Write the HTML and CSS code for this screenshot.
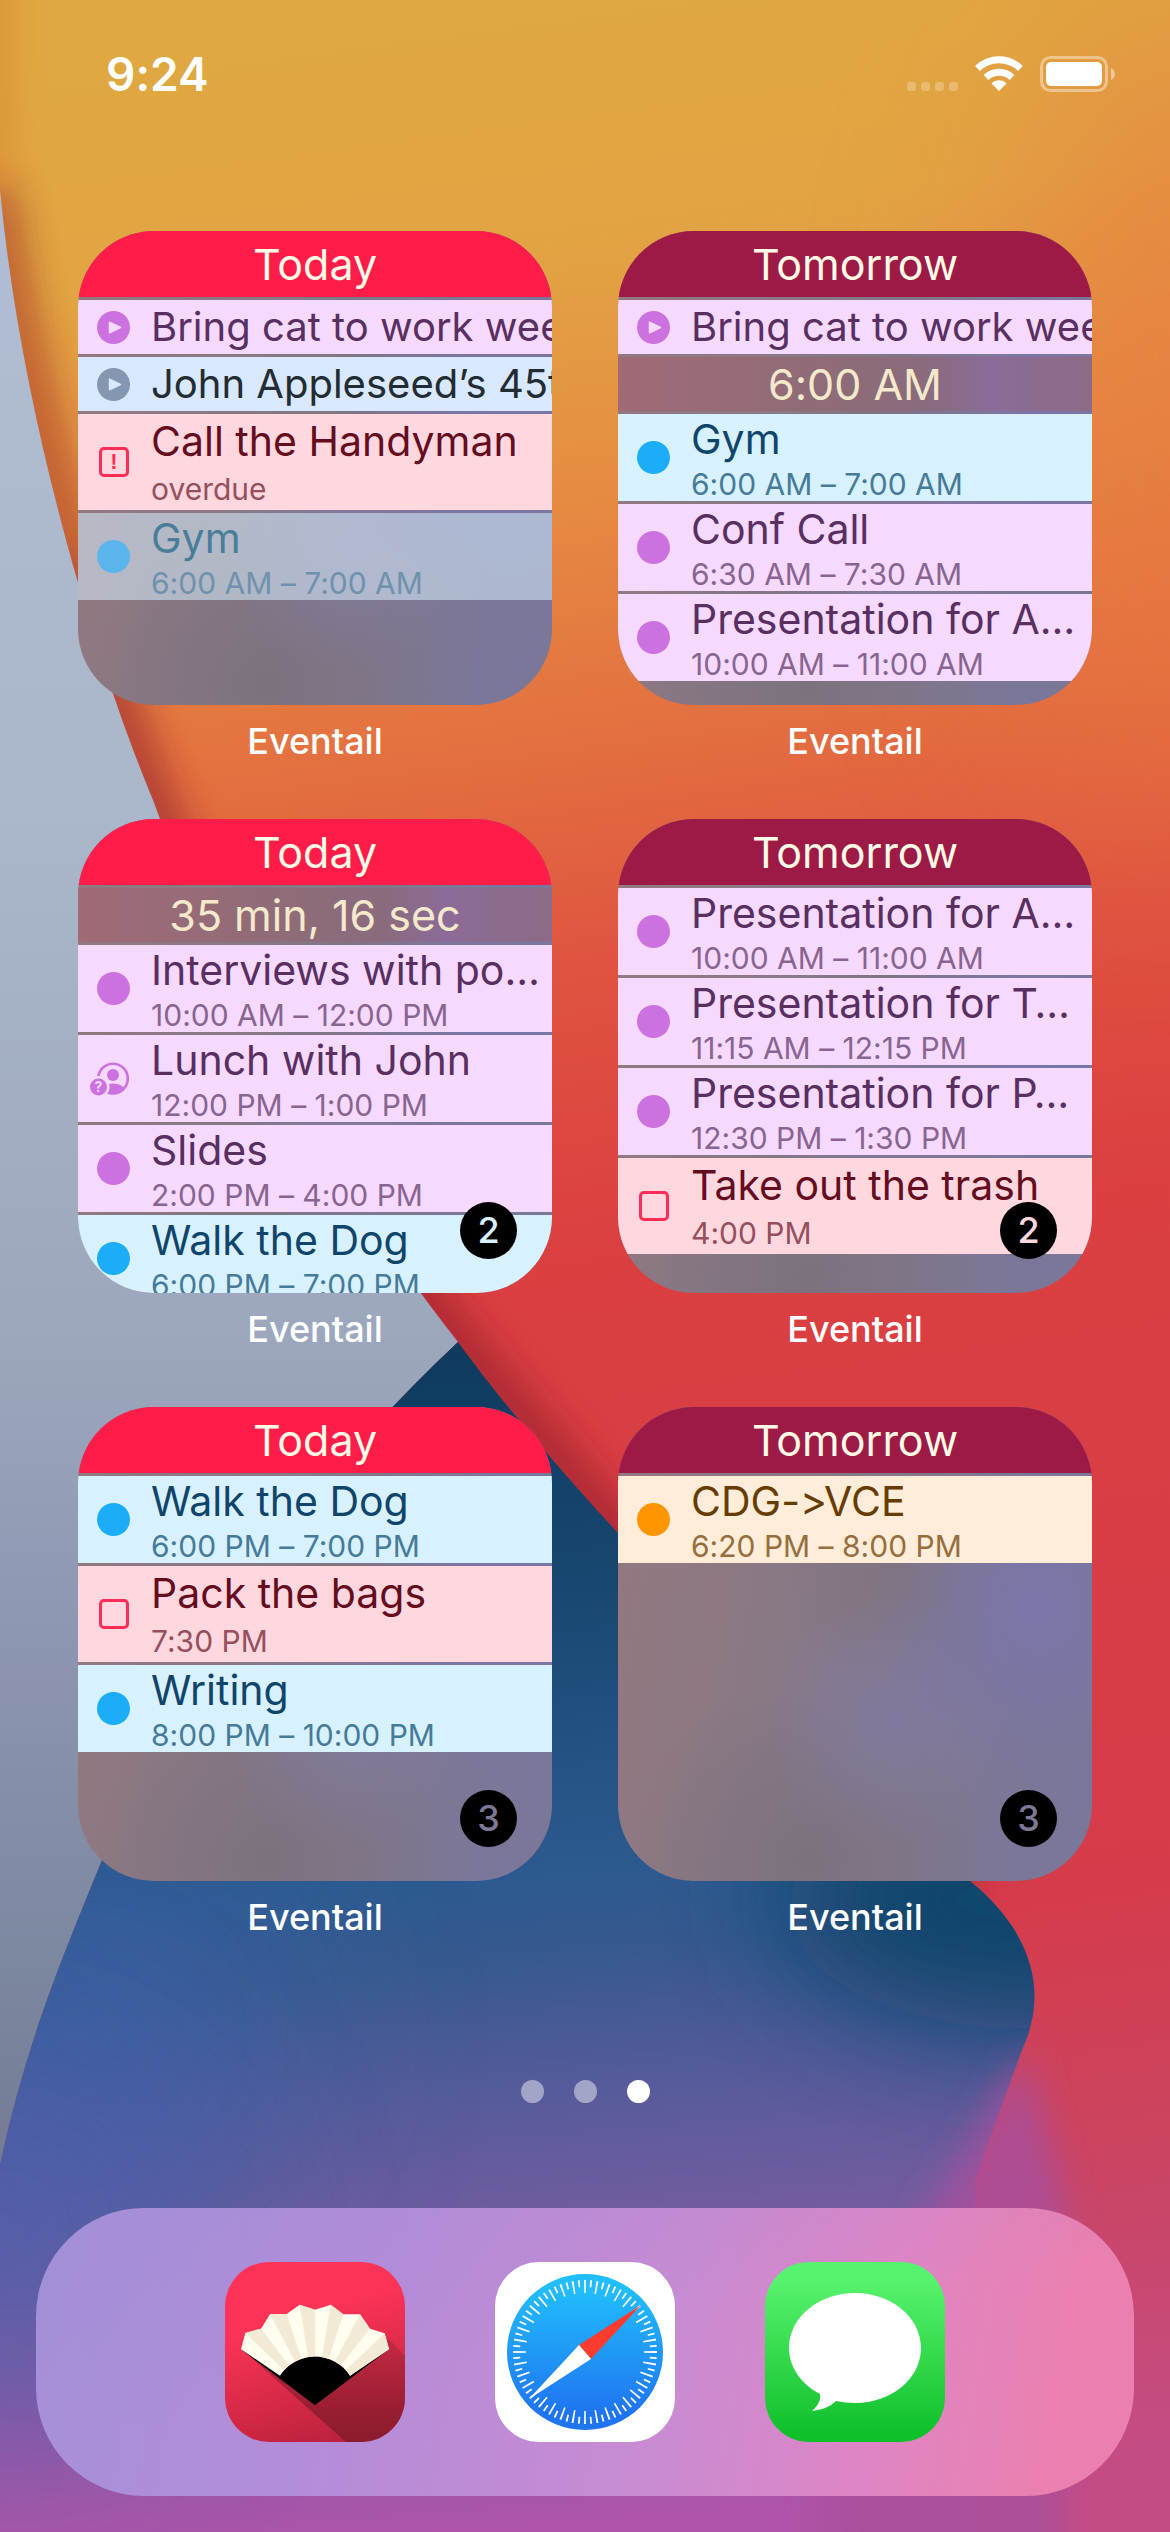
FILE: index.html
```html
<!DOCTYPE html>
<html lang="en">
<head>
<meta charset="utf-8">
<meta name="viewport" content="width=device-width, initial-scale=1">
<title>Home Screen</title>
<link rel="stylesheet" href="styles.css">
</head>
<body>
<div class="screen">
  <svg class="wallpaper" viewBox="0 0 1170 2532" preserveAspectRatio="none" aria-hidden="true">
    <defs>
      <linearGradient id="warm" gradientUnits="userSpaceOnUse" x1="420" y1="0" x2="760" y2="2500">
        <stop offset="0" stop-color="#dfa840"/>
        <stop offset=".1" stop-color="#e2a443"/>
        <stop offset=".2" stop-color="#e68c42"/>
        <stop offset=".3" stop-color="#e36f40"/>
        <stop offset=".39" stop-color="#df5340"/>
        <stop offset=".5" stop-color="#db3f40"/>
        <stop offset=".78" stop-color="#d53c4b"/>
        <stop offset=".88" stop-color="#cb4460"/>
        <stop offset="1" stop-color="#c44c84"/>
      </linearGradient>
      <linearGradient id="grey" gradientUnits="userSpaceOnUse" x1="0" y1="200" x2="0" y2="2160">
        <stop offset="0" stop-color="#b0bdd4"/>
        <stop offset=".32" stop-color="#aab6c9"/>
        <stop offset=".58" stop-color="#9ca7bd"/>
        <stop offset=".76" stop-color="#8b93af"/>
        <stop offset=".9" stop-color="#7c87a0"/>
        <stop offset="1" stop-color="#747c94"/>
      </linearGradient>
      <linearGradient id="blue" gradientUnits="userSpaceOnUse" x1="460" y1="1340" x2="560" y2="2532">
        <stop offset="0" stop-color="#0e3a5e"/>
        <stop offset=".2" stop-color="#17466f"/>
        <stop offset=".45" stop-color="#2c5a90"/>
        <stop offset=".52" stop-color="#37598f"/>
        <stop offset=".62" stop-color="#535b9a"/>
        <stop offset=".74" stop-color="#715c9f"/>
        <stop offset=".86" stop-color="#8a5aa8"/>
        <stop offset="1" stop-color="#b054a9"/>
      </linearGradient>
      <filter id="b20" x="-50%" y="-50%" width="200%" height="200%"><feGaussianBlur stdDeviation="18"/></filter>
      <filter id="b60" x="-100%" y="-100%" width="300%" height="300%"><feGaussianBlur stdDeviation="60"/></filter>
      <filter id="b100" x="-100%" y="-100%" width="300%" height="300%"><feGaussianBlur stdDeviation="100"/></filter>
      <clipPath id="blueClip"><path d="M458 1342C500 1400 560 1470 618 1533C700 1630 850 1790 970 1881C1030 1930 1050 1990 1022 2050L975 2180V2532H0V2165C25 2050 55 1975 100 1865C180 1660 300 1490 458 1342Z"/></clipPath>
    </defs>
    <rect width="1170" height="2532" fill="url(#warm)"/>
    <ellipse cx="1190" cy="420" rx="180" ry="420" fill="#e8763f" opacity=".5" filter="url(#b100)"/>
    <path d="M-10 190C22 420 95 660 153 800C210 960 330 1180 458 1342L618 1533C700 1630 850 1790 970 1881" fill="none" stroke="#8e1a2c" stroke-width="44" opacity=".6" filter="url(#b20)"/>
    <path d="M-12 -80V190C10 330 40 460 70 560" fill="none" stroke="#d87a30" stroke-width="40" opacity=".5" filter="url(#b20)"/>
    <path d="M0 190C22 420 95 660 153 800C210 960 330 1180 458 1342C300 1490 180 1660 100 1865C55 1975 25 2050 0 2165Z" fill="url(#grey)"/>
    <g clip-path="url(#blueClip)">
      <rect width="1170" height="1300" y="1300" fill="url(#blue)"/>
      <ellipse cx="90" cy="2030" rx="190" ry="190" fill="#3c62a6" opacity=".7" filter="url(#b100)"/>
      <ellipse cx="0" cy="2230" rx="200" ry="160" fill="#4f60ae" opacity=".7" filter="url(#b100)"/>
      <ellipse cx="1040" cy="1900" rx="260" ry="130" fill="#10446a" opacity=".95" filter="url(#b60)"/>
    </g>
    <path d="M1026 2050L1064 2200V2600H800L860 2320L955 2170Z" fill="#a9509d" opacity=".85" filter="url(#b20)"/>
  </svg>

  <header class="status">
    <time class="clock">9:24</time>
    <svg class="status-icons" width="208" height="37" viewBox="907 55 208 37" role="img" aria-label="No signal, Wi-Fi, battery full">
      <g fill="#fff" fill-opacity=".25">
        <rect x="907" y="82" width="9" height="9" rx="3"/><rect x="921" y="82" width="9" height="9" rx="3"/>
        <rect x="935" y="82" width="9" height="9" rx="3"/><rect x="949" y="82" width="9" height="9" rx="3"/>
      </g>
      <g fill="none" stroke="#fff" stroke-width="7">
        <path d="M977.500 68.500A31 31 0 0 1 1020.500 68.500"/>
        <path d="M986 77.500A19 19 0 0 1 1012 77.500"/>
      </g>
      <path d="M999 91L991.500 83.500A10.500 10.500 0 0 1 1006.500 83.500Z" fill="#fff"/>
      <rect x="1041.500" y="57.500" width="65" height="33" rx="9" fill="none" stroke="#fff" stroke-opacity=".4" stroke-width="3"/>
      <rect x="1046" y="62" width="56" height="24" rx="5" fill="#fff"/>
      <path d="M1111 68V80Q1115 78 1115 74T1111 68Z" fill="#fff" fill-opacity=".45"/>
    </svg>
  </header>

  <main class="widgets">
    <section class="widget">
      <article class="card">
        <h2 class="day today">Today</h2>
        <div class="row allday purple"><svg class="icon" viewBox="0 0 33 33" aria-hidden="true"><circle cx="16.500" cy="16.500" r="16.500" fill="#cb72e0"/><path d="M12.500 11.200V21.800L23.500 16.500Z" fill="#f6d9fe" stroke="#f6d9fe" stroke-width="1.500" stroke-linejoin="round"/></svg><h3 class="title">Bring cat to work week</h3></div>
        <div class="row allday steel"><svg class="icon" viewBox="0 0 33 33" aria-hidden="true"><circle cx="16.500" cy="16.500" r="16.500" fill="#8397b0"/><path d="M12.500 11.200V21.800L23.500 16.500Z" fill="#d8e8fe" stroke="#d8e8fe" stroke-width="1.500" stroke-linejoin="round"/></svg><h3 class="title">John Appleseed’s 45th</h3></div>
        <div class="row task red"><input class="check overdue" type="checkbox" id="handyman"><label class="text" for="handyman"><span class="title">Call the Handyman</span><span class="sub">overdue</span></label></div>
        <div class="row event blue past"><span class="dot"></span><div class="text"><h3 class="title">Gym</h3><p class="sub">6:00 AM – 7:00 AM</p></div></div>
      </article>
      <p class="caption">Eventail</p>
    </section>

    <section class="widget">
      <article class="card">
        <h2 class="day tomorrow">Tomorrow</h2>
        <div class="row allday purple"><svg class="icon" viewBox="0 0 33 33" aria-hidden="true"><circle cx="16.500" cy="16.500" r="16.500" fill="#cb72e0"/><path d="M12.500 11.200V21.800L23.500 16.500Z" fill="#f6d9fe" stroke="#f6d9fe" stroke-width="1.500" stroke-linejoin="round"/></svg><h3 class="title">Bring cat to work week</h3></div>
        <p class="band">6:00 AM</p>
        <div class="row event blue"><span class="dot"></span><div class="text"><h3 class="title">Gym</h3><p class="sub">6:00 AM – 7:00 AM</p></div></div>
        <div class="row event purple"><span class="dot"></span><div class="text"><h3 class="title">Conf Call</h3><p class="sub">6:30 AM – 7:30 AM</p></div></div>
        <div class="row event purple"><span class="dot"></span><div class="text"><h3 class="title">Presentation for A…</h3><p class="sub">10:00 AM – 11:00 AM</p></div></div>
      </article>
      <p class="caption">Eventail</p>
    </section>

    <section class="widget">
      <article class="card">
        <h2 class="day today">Today</h2>
        <p class="band">35 min, 16 sec</p>
        <div class="row event purple"><span class="dot"></span><div class="text"><h3 class="title">Interviews with po…</h3><p class="sub">10:00 AM – 12:00 PM</p></div></div>
        <div class="row event purple">
          <svg class="icon" viewBox="0 0 33 33" role="img" aria-label="Not yet answered">
            <defs><clipPath id="person"><circle cx="16" cy="16.500" r="16"/></clipPath></defs>
            <circle cx="16" cy="16.500" r="14.800" fill="none" stroke="#cb72e0" stroke-width="2.600"/>
            <circle cx="16" cy="13" r="6" fill="#cb72e0"/>
            <ellipse cx="16" cy="28" rx="11.500" ry="6.500" fill="#cb72e0" clip-path="url(#person)"/>
            <circle cx="1.500" cy="25" r="11" fill="#f6d9fe"/>
            <circle cx="1.500" cy="25" r="8.500" fill="#cb72e0"/>
            <text x="1.500" y="30" text-anchor="middle" class="query">?</text>
          </svg>
          <div class="text"><h3 class="title">Lunch with John</h3><p class="sub">12:00 PM – 1:00 PM</p></div>
        </div>
        <div class="row event purple"><span class="dot"></span><div class="text"><h3 class="title">Slides</h3><p class="sub">2:00 PM – 4:00 PM</p></div></div>
        <div class="row event blue"><span class="dot"></span><div class="text"><h3 class="title">Walk the Dog</h3><p class="sub">6:00 PM – 7:00 PM</p></div></div>
        <span class="badge on-blue">2</span>
      </article>
      <p class="caption">Eventail</p>
    </section>

    <section class="widget">
      <article class="card">
        <h2 class="day tomorrow">Tomorrow</h2>
        <div class="row event purple"><span class="dot"></span><div class="text"><h3 class="title">Presentation for A…</h3><p class="sub">10:00 AM – 11:00 AM</p></div></div>
        <div class="row event purple"><span class="dot"></span><div class="text"><h3 class="title">Presentation for T…</h3><p class="sub">11:15 AM – 12:15 PM</p></div></div>
        <div class="row event purple"><span class="dot"></span><div class="text"><h3 class="title">Presentation for P…</h3><p class="sub">12:30 PM – 1:30 PM</p></div></div>
        <div class="row task red"><input class="check" type="checkbox" id="trash"><label class="text" for="trash"><span class="title">Take out the trash</span><span class="sub">4:00 PM</span></label></div>
        <span class="badge on-red">2</span>
      </article>
      <p class="caption">Eventail</p>
    </section>

    <section class="widget">
      <article class="card">
        <h2 class="day today">Today</h2>
        <div class="row event blue"><span class="dot"></span><div class="text"><h3 class="title">Walk the Dog</h3><p class="sub">6:00 PM – 7:00 PM</p></div></div>
        <div class="row task red"><input class="check" type="checkbox" id="bags"><label class="text" for="bags"><span class="title">Pack the bags</span><span class="sub">7:30 PM</span></label></div>
        <div class="row event blue"><span class="dot"></span><div class="text"><h3 class="title">Writing</h3><p class="sub">8:00 PM – 10:00 PM</p></div></div>
        <span class="badge">3</span>
      </article>
      <p class="caption">Eventail</p>
    </section>

    <section class="widget">
      <article class="card">
        <h2 class="day tomorrow">Tomorrow</h2>
        <div class="row event orange"><span class="dot"></span><div class="text"><h3 class="title">CDG-&gt;VCE</h3><p class="sub">6:20 PM – 8:00 PM</p></div></div>
        <span class="badge">3</span>
      </article>
      <p class="caption">Eventail</p>
    </section>
  </main>

  <nav class="pages" aria-label="Pages">
    <button class="page" type="button" aria-label="Page 1"></button>
    <button class="page" type="button" aria-label="Page 2"></button>
    <button class="page current" type="button" aria-label="Page 3" aria-current="page"></button>
  </nav>

  <nav class="dock" aria-label="Dock">
    <a class="app" href="#eventail" aria-label="Eventail">
      <svg viewBox="0 0 180 180" aria-hidden="true">
        <defs>
          <linearGradient id="fanBg" x1=".3" y1="0" x2=".6" y2="1"><stop offset=".3" stop-color="#fc3357"/><stop offset="1" stop-color="#bc223c"/></linearGradient>
          <linearGradient id="fanShade" x1="0" y1="0" x2="0" y2="1"><stop offset="0" stop-color="#c42a43"/><stop offset=".7" stop-color="#981d31"/><stop offset="1" stop-color="#8c1c2d"/></linearGradient>
        </defs>
        <rect width="180" height="180" fill="url(#fanBg)"/>
        <path d="M20 90L121 180H180V94L164 77Z" fill="url(#fanShade)"/>
        <g transform="translate(-10 -10) scale(.33333)">
          <path d="M78 292L300 460L522 292L405 350L300 320L195 350Z"/>
          <path d="M195 371A125 125 0 0 1 405 371L300 455Z"/>
          <path fill="#fffdee" d="M78 292L91 243L138 230L165 187L215 186L254 158L300 173L347 158L385 187L435 187L465 230L509 244L522 292L405 371A125 125 0 0 0 195 371Z"/>
          <path fill="#f2ead5" d="M91 243L138 230L222 340L207 354ZM165 187L215 186L259 320L240 328ZM254 158L300 173V313L279 315ZM347 158L385 187L341 320L321 315ZM435 187L465 230L378 340L360 328ZM509 244L522 292L405 371L393 354Z"/>
        </g>
      </svg>
    </a>
    <a class="app" href="#safari" aria-label="Safari">
      <svg viewBox="0 0 180 180" aria-hidden="true">
        <defs><linearGradient id="sea" x1="0" y1="0" x2="0" y2="1"><stop offset=".1" stop-color="#21bdfc"/><stop offset=".9" stop-color="#1f74f0"/></linearGradient></defs>
        <rect width="180" height="180" fill="#fff"/>
        <circle cx="90" cy="90" r="78" fill="url(#sea)"/>
        <g fill="none" stroke="#fff">
          <circle cx="90" cy="90" r="65.500" stroke-width="13" pathLength="360" stroke-dasharray="1.500 8.500" stroke-dashoffset=".75"/>
          <circle cx="90" cy="90" r="68.500" stroke-width="7" pathLength="360" stroke-dasharray="1.500 8.500" stroke-dashoffset="-4.250"/>
        </g>
        <path d="M146 43L84 83L96 97Z" fill="#fe3b2f"/>
        <path d="M34 137L84 83L96 97Z" fill="#fff"/>
      </svg>
    </a>
    <a class="app" href="#messages" aria-label="Messages">
      <svg viewBox="0 0 180 180" aria-hidden="true">
        <defs><linearGradient id="leaf" x1="0" y1="0" x2="0" y2="1"><stop offset=".1" stop-color="#57f36e"/><stop offset=".95" stop-color="#10c02b"/></linearGradient></defs>
        <rect width="180" height="180" fill="url(#leaf)"/>
        <path d="M90 31C126 31 156 55 156 86S126 141 90 141C84 141 77 140 71 139C65 145 56 148 47 149C53 144 56 138 55 132C36 122 24 105 24 86C24 55 54 31 90 31Z" fill="#fff"/>
      </svg>
    </a>
  </nav>
</div>
</body>
</html>
```

FILE: styles.css
```css
* {
  box-sizing: border-box;
}

body {
  margin: 0;
  font-family: Inter, "Liberation Sans", sans-serif;
  font-feature-settings: "calt" 0;
}

h2, h3, p {
  margin: 0;
  font-weight: 400;
}

.screen {
  position: relative;
  isolation: isolate;
  display: flex;
  flex-direction: column;
  min-height: 100vh;
  padding-bottom: 36px;
  overflow: hidden;
  background: #df5340;
}

.wallpaper {
  position: absolute;
  inset: 0;
  z-index: -1;
  width: 100%;
  height: 100%;
}

.status {
  display: flex;
  justify-content: space-between;
  align-items: center;
  height: 147px;
  margin-bottom: 84px;
  padding: 0 55px 0 106px;
  color: #fff;
}

.clock {
  font-size: 46px;
  font-weight: 600;
}

.widgets {
  display: grid;
  grid-template-columns: repeat(2, minmax(0, 1fr));
  gap: 42px 66px;
  padding: 0 78px;
}

.card {
  position: relative;
  display: flex;
  flex-direction: column;
  gap: 3px;
  aspect-ratio: 1;
  min-height: 0;
  overflow: hidden;
  border-radius: 76px;
  background:
    radial-gradient(circle at 88% 42%, #7a76aa, transparent 34%),
    radial-gradient(circle at 58% 66%, #81799c, transparent 30%),
    radial-gradient(circle at 40% 96%, #7c727e, transparent 34%),
    radial-gradient(circle at 60% 36%, #80747c, transparent 30%),
    linear-gradient(100deg, #94787f, #877986 40%, #7b7798 85%);
}

.card > * {
  flex: none;
}

.day {
  font-size: 43px;
  line-height: 66px;
  text-align: center;
  color: #fff9e6;
}

.today { background: #ff1c49; }
.tomorrow { background: #9d1a47; }

.band {
  font-size: 43px;
  line-height: 54px;
  text-align: center;
  color: #f5e9cc;
  background: linear-gradient(90deg, #a06a76, #8e6c78 45%, #8a6b7e 65%, #8c6b98 78%, #8c6b86);
}

.row {
  display: flex;
  align-items: center;
  gap: 21px;
  padding-left: 19px;
  background: var(--fill);
  color: var(--ink);
}

.allday { height: 54px; }
.event { height: 87px; }
.task { height: 96px; }

.purple { --fill: #f6d9fe; --ink: #582f60; --soft: #886591; --mark: #cb72e0; }
.blue { --fill: #d8f1ff; --ink: #10456b; --soft: #457b98; --mark: #1badf8; }
.steel { --fill: #d8e8fe; --ink: #232b33; }
.red { --fill: #ffd8df; --ink: #650d1f; --soft: #964f5c; }
.orange { --fill: #ffedd9; --ink: #663c00; --soft: #966e3e; --mark: #ff9500; }
.past { --fill: rgba(216, 241, 255, .54); --ink: #487e9a; --soft: #6f92ac; --mark: #5ab5ec; }

.icon,
.dot {
  flex: none;
  width: 33px;
  height: 33px;
}

.icon { overflow: visible; }

.dot {
  border-radius: 50%;
  background: var(--mark);
}

.query {
  font-size: 14px;
  font-weight: 700;
  fill: #f6d9fe;
}

.text {
  display: flex;
  flex-direction: column;
  align-self: flex-start;
  gap: 3px;
}

.title {
  font-size: 41px;
  line-height: 50px;
  white-space: nowrap;
}

.sub {
  font-size: 30px;
  line-height: 34px;
  white-space: nowrap;
  color: var(--soft);
}

.allday .title {
  font-size: 40px;
  line-height: 54px;
}

.task .title { line-height: 54px; }
.task .text { gap: 4px; }

.check {
  appearance: none;
  flex: none;
  display: grid;
  place-items: center;
  width: 30px;
  height: 30px;
  margin: 0 1px 0 2px;
  border: 3px solid #ff2d55;
  border-radius: 5px;
}

.overdue::before {
  content: "!";
  font-size: 22px;
  font-weight: 600;
  line-height: 24px;
  color: #ff2d55;
}

.badge {
  position: absolute;
  right: 35px;
  bottom: 34px;
  width: 57px;
  border-radius: 50%;
  font-size: 36px;
  font-weight: 500;
  line-height: 57px;
  text-align: center;
  color: #7d7995;
  background: #000;
}

.on-blue { color: #d8f1ff; }
.on-red { color: #ffd8df; }

.caption {
  font-size: 36px;
  font-weight: 500;
  line-height: 72px;
  text-align: center;
  color: #fff;
}

.pages {
  display: flex;
  justify-content: center;
  gap: 30px;
  margin: auto 0 105px;
}

.page {
  width: 23px;
  height: 23px;
  padding: 0;
  border: 0;
  border-radius: 50%;
  background: rgba(255, 255, 255, .45);
}

.current { background: #fff; }

.dock {
  display: flex;
  justify-content: center;
  align-items: center;
  gap: 90px;
  height: 288px;
  margin: 0 36px;
  border-radius: 108px;
  background:
    linear-gradient(170deg, rgba(150, 140, 215, .25), transparent 50%),
    linear-gradient(100deg, #a591d8, #b58cd8 30%, #c98bd2 58%, #de85c4 76%, #ea80b0 92%);
}

.app {
  width: 180px;
  height: 180px;
  overflow: hidden;
  border-radius: 44px;
}

.app svg {
  display: block;
}
```
